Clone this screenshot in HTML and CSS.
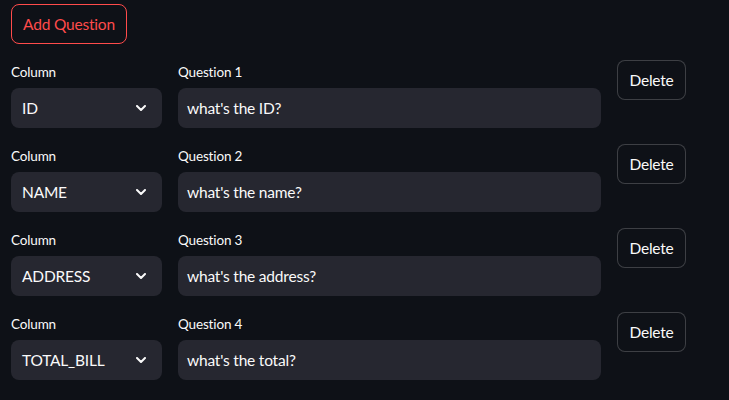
FILE: index.html
```html
<!DOCTYPE html>
<html>
<head>
<meta charset="utf-8">
<link rel="stylesheet" href="styles.css">
</head>
<body>
<div class="page">
  <div class="top"><button class="btn btn-add">Add Question</button></div>
  <div class="rows">
    <div class="row">
      <div class="field">
        <label class="lbl">Column</label>
        <div class="select"><span>ID</span><svg class="chev" width="10" height="6" viewBox="0 0 10 6"><path d="M1 1 L5 5 L9 1" fill="none" stroke="#fafafa" stroke-width="2" stroke-linecap="round" stroke-linejoin="round"/></svg></div>
      </div>
      <div class="field">
        <label class="lbl">Question 1</label>
        <div class="input">what's the ID?</div>
      </div>
      <div class="act"><button class="btn btn-del">Delete</button></div>
    </div>
    <div class="row">
      <div class="field">
        <label class="lbl">Column</label>
        <div class="select"><span>NAME</span><svg class="chev" width="10" height="6" viewBox="0 0 10 6"><path d="M1 1 L5 5 L9 1" fill="none" stroke="#fafafa" stroke-width="2" stroke-linecap="round" stroke-linejoin="round"/></svg></div>
      </div>
      <div class="field">
        <label class="lbl">Question 2</label>
        <div class="input">what's the name?</div>
      </div>
      <div class="act"><button class="btn btn-del">Delete</button></div>
    </div>
    <div class="row">
      <div class="field">
        <label class="lbl">Column</label>
        <div class="select"><span>ADDRESS</span><svg class="chev" width="10" height="6" viewBox="0 0 10 6"><path d="M1 1 L5 5 L9 1" fill="none" stroke="#fafafa" stroke-width="2" stroke-linecap="round" stroke-linejoin="round"/></svg></div>
      </div>
      <div class="field">
        <label class="lbl">Question 3</label>
        <div class="input">what's the address?</div>
      </div>
      <div class="act"><button class="btn btn-del">Delete</button></div>
    </div>
    <div class="row">
      <div class="field">
        <label class="lbl">Column</label>
        <div class="select"><span>TOTAL_BILL</span><svg class="chev" width="10" height="6" viewBox="0 0 10 6"><path d="M1 1 L5 5 L9 1" fill="none" stroke="#fafafa" stroke-width="2" stroke-linecap="round" stroke-linejoin="round"/></svg></div>
      </div>
      <div class="field">
        <label class="lbl">Question 4</label>
        <div class="input">what's the total?</div>
      </div>
      <div class="act"><button class="btn btn-del">Delete</button></div>
    </div>
  </div>
</div>
</body>
</html>
```
FILE: styles.css
```css
html, body {
  margin: 0;
  padding: 0;
  background: #0e1117;
  color: #fafafa;
  font-family: "Lato", "Open Sans", sans-serif;
}
.page {
  padding: 4px 0 0 11px;
  display: flex;
  flex-direction: column;
  gap: 16px;
}
.btn {
  font-family: inherit;
  font-size: 15.5px;
  letter-spacing: -0.2px;
  height: 40px;
  border-radius: 8px;
  background: #0e1117;
  cursor: pointer;
}
.btn-add {
  width: 116px;
  color: #ff4b4b;
  border: 1px solid #ff4b4b;
  padding: 0;
}
.rows {
  display: flex;
  flex-direction: column;
  gap: 16px;
}
.row {
  display: grid;
  grid-template-columns: 151px 423px auto;
  column-gap: 16px;
  align-items: start;
}
.field {
  display: flex;
  flex-direction: column;
}
.lbl {
  font-size: 13.5px;
  letter-spacing: -0.15px;
  height: 24px;
  line-height: 24px;
  margin-bottom: 4px;
  color: #fafafa;
}
.select, .input {
  height: 40px;
  background: #262730;
  border-radius: 8px;
  display: flex;
  align-items: center;
  font-size: 15.5px;
  letter-spacing: -0.2px;
  box-sizing: border-box;
}
.select {
  padding: 0 16px 0 11px;
  justify-content: space-between;
}
.input {
  padding-left: 9px;
}
.chev {
  display: block;
}
.btn-del {
  width: 69px;
  color: #fafafa;
  border: 1px solid rgba(250, 250, 250, 0.2);
  padding: 0;
}
```
